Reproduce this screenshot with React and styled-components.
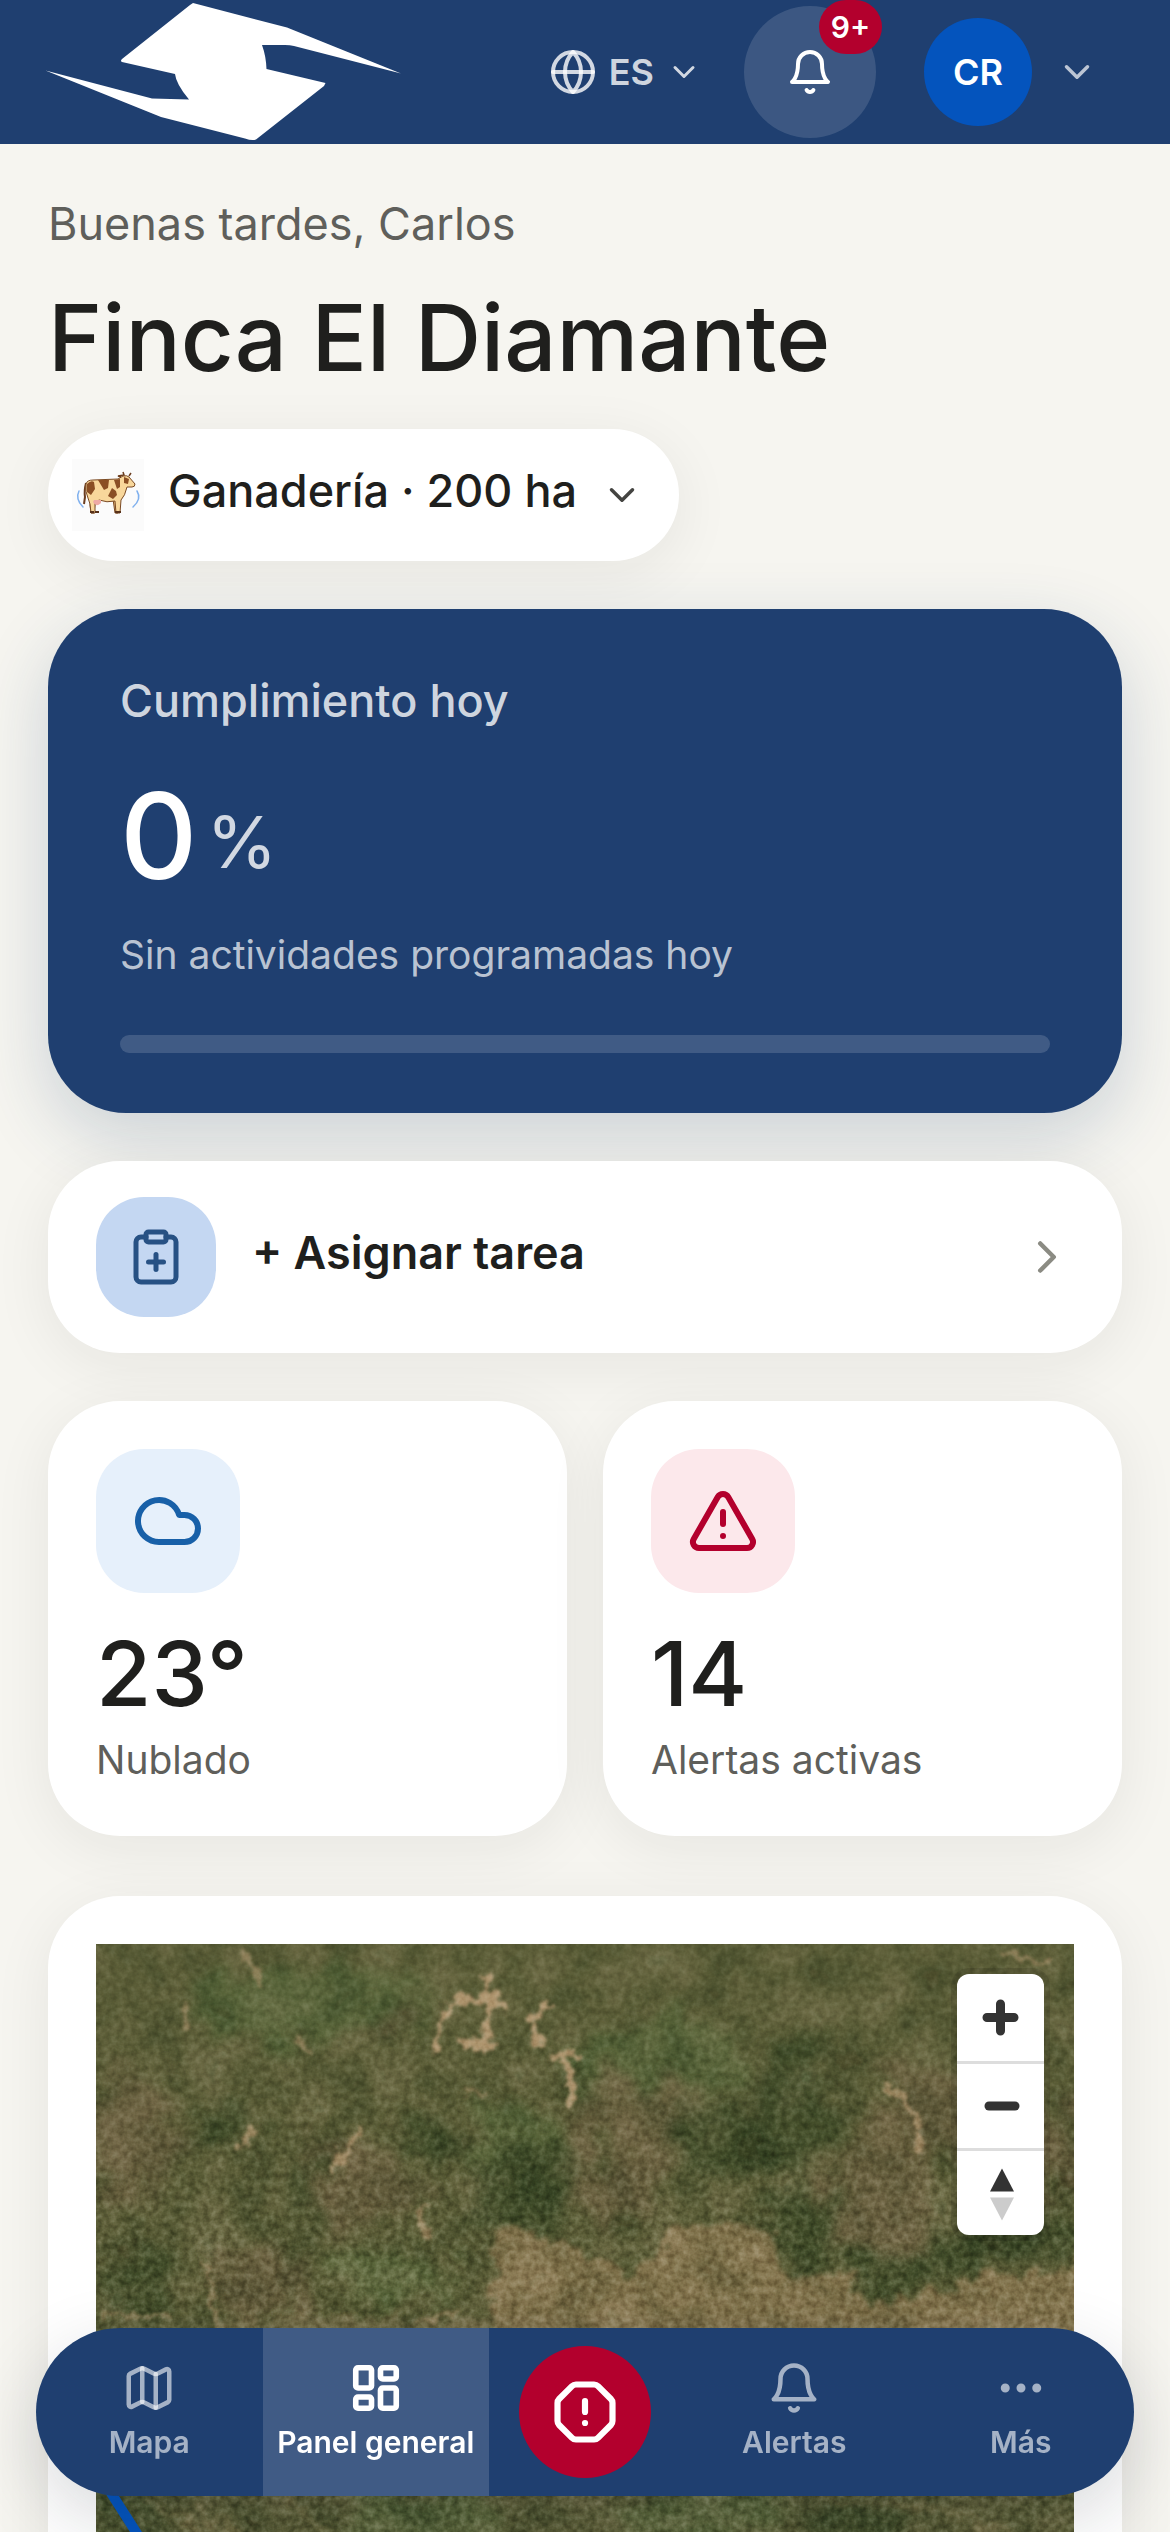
import { useState } from "react";
import styled, { createGlobalStyle } from "styled-components";
import {
  ChevronDown,
  ChevronRight,
  ClipboardPlus,
  Ellipsis,
  Globe,
  LayoutDashboard,
  Map,
  OctagonAlert,
  TriangleAlert,
} from "lucide-react";

const GlobalStyle = createGlobalStyle`
  * {
    box-sizing: border-box;
  }
  body {
    margin: 0;
    background-color: #f6f5f0;
    color: #1f1f1d;
    font-family: Inter, "Liberation Sans", sans-serif;
  }
  button {
    font: inherit;
    color: inherit;
    border: 0;
    padding: 0;
    background: none;
    cursor: pointer;
  }
  a {
    color: inherit;
    text-decoration: none;
  }
  svg {
    display: block;
    flex-shrink: 0;
  }
`;

const Screen = styled.div`
  height: 100vh;
  display: flex;
  flex-direction: column;
`;

const Header = styled.header`
  flex-shrink: 0;
  height: 144px;
  padding: 0 72px 0 45px;
  display: flex;
  align-items: center;
  justify-content: space-between;
  background-color: #1f3f70;
  color: #fff;
`;

const HeaderTools = styled.div`
  display: flex;
  align-items: center;
`;

const LangButton = styled.button`
  display: flex;
  align-items: center;
  gap: 12px;
  margin-right: 42px;
  color: rgba(255, 255, 255, 0.8);
  font-size: 36px;
  font-weight: 600;
`;

const BellButton = styled.button`
  position: relative;
  width: 132px;
  height: 132px;
  margin-right: 48px;
  border-radius: 50%;
  background-color: rgba(255, 255, 255, 0.13);
  display: flex;
  justify-content: center;
  align-items: center;
`;

const Badge = styled.span`
  position: absolute;
  top: -6px;
  right: -6px;
  min-width: 63px;
  height: 54px;
  border-radius: 27px;
  background-color: #b3002d;
  font-size: 30px;
  font-weight: 600;
  line-height: 54px;
  text-align: center;
`;

const ProfileButton = styled.button`
  display: flex;
  align-items: center;
  gap: 24px;
  color: rgba(255, 255, 255, 0.7);
`;

const Avatar = styled.span`
  width: 108px;
  height: 108px;
  border-radius: 50%;
  background-color: #0454bd;
  color: #fff;
  font-size: 36px;
  font-weight: 600;
  line-height: 108px;
  text-align: center;
`;

const Content = styled.main`
  flex: 1;
  min-height: 0;
  overflow-y: auto;
  scrollbar-width: none;
  padding: 48px 48px 0;
`;

const Greeting = styled.p`
  margin: 0 0 26px;
  color: #5f5f5b;
  font-size: 45px;
  line-height: 63px;
`;

const FarmName = styled.h1`
  margin: 0 0 34px;
  font-size: 92px;
  font-weight: 500;
  line-height: 114px;
`;

const softShadow = "0 12px 60px rgba(31, 35, 30, 0.07)";

const FarmButton = styled.button`
  height: 132px;
  padding: 0 36px 0 24px;
  border-radius: 66px;
  background-color: #fff;
  box-shadow: ${softShadow};
  display: flex;
  align-items: center;
  color: #444441;
`;

const RowLabel = styled.span`
  padding-bottom: 9px;
  color: #1f1f1d;
  font-size: 45px;
  font-weight: ${(props) => props.$weight};
`;

const FarmLabel = styled(RowLabel)`
  margin: 0 24px;
`;

const Hero = styled.section`
  margin-top: 48px;
  padding: 60px 72px;
  border-radius: 78px;
  background-color: #1f3f70;
  box-shadow: 0 24px 72px rgba(31, 63, 112, 0.2);
`;

const HeroTitle = styled.h2`
  margin: 0 0 44px;
  color: rgba(255, 255, 255, 0.8);
  font-size: 45px;
  font-weight: 500;
  line-height: 63px;
`;

const HeroValue = styled.div`
  display: flex;
  align-items: flex-end;
  gap: 9px;
  color: #fff;
  font-size: 120px;
  font-weight: 500;
  line-height: 120px;
`;

const HeroUnit = styled.span`
  color: rgba(255, 255, 255, 0.8);
  font-size: 72px;
  font-weight: 400;
  line-height: 108px;
`;

const HeroNote = styled.p`
  margin: 30px 0 52px;
  color: rgba(255, 255, 255, 0.7);
  font-size: 39px;
  line-height: 57px;
`;

const Track = styled.div`
  height: 18px;
  border-radius: 9px;
  overflow: hidden;
  background-color: rgba(255, 255, 255, 0.15);
`;

const TrackFill = styled.div`
  height: 100%;
  background-color: #fff;
`;

const TaskButton = styled.button`
  width: 100%;
  height: 192px;
  margin-top: 48px;
  padding: 0 48px;
  border-radius: 72px;
  background-color: #fff;
  box-shadow: ${softShadow};
  display: flex;
  align-items: center;
  gap: 36px;
  color: #8b8b83;
  text-align: left;

  ${RowLabel} {
    flex: 1;
  }
`;

const IconTile = styled.span`
  width: ${(props) => props.$size}px;
  height: ${(props) => props.$size}px;
  border-radius: 48px;
  background-color: ${(props) => props.$bg};
  color: ${(props) => props.$color};
  display: flex;
  justify-content: center;
  align-items: center;
`;

const Stats = styled.div`
  margin-top: 48px;
  display: grid;
  grid-template-columns: 1fr 1fr;
  gap: 36px;
`;

const StatCard = styled.a`
  padding: 48px;
  border-radius: 72px;
  background-color: #fff;
  box-shadow: ${softShadow};
`;

const StatValue = styled.div`
  margin: 36px 0 12px;
  font-size: 90px;
  font-weight: 500;
  line-height: 90px;
`;

const StatLabel = styled.div`
  color: #5f5f5b;
  font-size: 39px;
  line-height: 57px;
`;

const MapCard = styled.section`
  margin-top: 60px;
  padding: 48px;
  border-radius: 72px;
  background-color: #fff;
  box-shadow: ${softShadow};
`;

const MapFrame = styled.div`
  position: relative;
  height: 720px;
  overflow: hidden;
  background-color: #5b5d36;
`;

const MapControls = styled.div`
  position: absolute;
  top: 30px;
  right: 30px;
  width: 87px;
  border-radius: 12px;
  background-color: #fff;
  box-shadow: 0 0 0 6px rgba(0, 0, 0, 0.1);
`;

const MapControl = styled.button`
  display: block;
  width: 87px;
  height: 87px;

  & + & {
    border-top: 3px solid #ddd;
  }
`;

const NavBar = styled.nav`
  position: fixed;
  left: 36px;
  right: 36px;
  bottom: 36px;
  height: 168px;
  border-radius: 84px;
  overflow: hidden;
  background-color: #1f3f70;
  box-shadow: 0 24px 72px rgba(20, 25, 35, 0.16);
  display: grid;
  grid-template-columns: 1fr 1fr 192px 1fr 1fr;
`;

const NavItem = styled.a`
  padding-bottom: 3px;
  display: flex;
  flex-direction: column;
  justify-content: center;
  align-items: center;
  gap: 9px;
  color: ${(props) => (props.$active ? "#fff" : "rgba(255, 255, 255, 0.6)")};
  background-color: ${(props) =>
    props.$active ? "rgba(255, 255, 255, 0.15)" : "transparent"};
  font-size: 30px;
  font-weight: 600;
  line-height: 36px;
  white-space: nowrap;
`;

const ReportButton = styled.button`
  place-self: center;
  width: 132px;
  height: 132px;
  border-radius: 50%;
  background-color: #b3002d;
  color: #fff;
  display: flex;
  justify-content: center;
  align-items: center;
`;

const Logo = () => (
  <svg width="356" height="144" viewBox="45 0 356 144" role="img" aria-label="Inicio">
    <path
      fill="#fff"
      d="M193 3 L287 27.500 L401 73.500 L294 46 Q290 45 285 45 L262 45 Q266 56 266.500 69 L325.500 83 L324 86 L256 139.500 Q252 141 245 138.500 L161 117 L45.500 70.500 L152 98.500 L189 99.500 Q176 84 175 74 L122 62 Q120 61 122 59 L190 5 Z"
    />
  </svg>
);

const BellIcon = ({ size }) => (
  <svg
    width={size}
    height={size}
    viewBox="0 0 24 24"
    fill="none"
    stroke="currentColor"
    strokeWidth="2"
    strokeLinecap="round"
    strokeLinejoin="round"
    aria-hidden="true"
  >
    <path d="M6 8a6 6 0 0 1 12 0c0 7 3 9 3 9H3s3-2 3-9" />
    <path d="M10.300 21a1.940 1.940 0 0 0 3.400 0" />
  </svg>
);

const CloudIcon = ({ size }) => (
  <svg
    width={size}
    height={size}
    viewBox="0 0 24 24"
    fill="none"
    stroke="currentColor"
    strokeWidth="2"
    strokeLinecap="round"
    strokeLinejoin="round"
    aria-hidden="true"
  >
    <path d="M17.500 19H9a7 7 0 1 1 6.710-9h1.790a4.500 4.500 0 1 1 0 9Z" />
  </svg>
);

const CowIcon = () => (
  <svg width="72" height="72" viewBox="0 0 72 72" aria-hidden="true">
    <rect width="72" height="72" fill="#fbfbfb" />
    <g fill="none" stroke="#7fb0ee" strokeWidth="1.500" strokeLinecap="round">
      <path d="M7 32q-4 8 4 16M65 32q5 8 -4 16" />
    </g>
    <path d="M14 24q-2 8 -1 14l-1 7" fill="none" stroke="#6b3d1e" strokeWidth="2" />
    <g fill="#f8d79b" stroke="#7a4a24" strokeWidth="1" strokeLinejoin="round">
      <path d="M19 40l-1 6 1 8h3l1-9 3-5zM41 40l2 14h3l1-13z" fill="#e4b878" />
      <path d="M14 25q1-4 7-4l25-1 5-3q4-1 6 1l6 7q0 3-3 3l-5 0q-2 9-6 13l-1 13h-4l-1-12q-8 2-16-1l-4 3 0 10h-4l-1-9-2-6q-3-6-2-14z" />
    </g>
    <path d="M21 43q3 6 8 1l0-3h-7z" fill="#eeaaa6" />
    <g fill="#8b4f24">
      <path d="M15 25q4-4 7-2l1 7-4 6-4-3zM26 21h11l-1 8-4 2-3-5zM42 21l6-1 0 8-3 2zM40 29l4 3 1 4-4 4-5-3zM52 18l5 2-1 5-4-1z" />
    </g>
    <path d="M49 18l-3-1 6-1-1-3M57 17l2-3" fill="none" stroke="#6b3d1e" strokeWidth="1.500" />
    <path d="M18 53h4M23 53h4M43 53h3M45 53h4" stroke="#57311a" strokeWidth="2" />
  </svg>
);

const darkPatches = [
  [130, 172, 34, 18],
  [210, 245, 18, 30],
  [40, 345, 42, 34],
  [330, 190, 30, 20],
  [440, 225, 60, 26],
  [420, 262, 48, 24],
  [625, 195, 48, 34],
  [700, 115, 24, 34],
  [700, 180, 40, 36],
  [708, 285, 34, 44],
  [795, 328, 46, 20],
  [872, 312, 44, 18],
  [950, 300, 46, 10],
  [760, 580, 50, 18],
  [30, 580, 40, 30],
];

const brownPatches = [
  [34, 190, 46, 60],
  [160, 340, 50, 40],
  [540, 170, 70, 40],
  [785, 255, 60, 60],
  [830, 165, 50, 50],
  [930, 200, 50, 60],
  [260, 240, 60, 50],
  [520, 240, 50, 34],
  [290, 78, 26, 14],
];

const greenPatches = [
  [300, 335, 60, 30],
  [420, 185, 50, 24],
  [560, 120, 90, 50],
  [210, 60, 120, 40],
  [330, 580, 90, 34],
  [600, 575, 90, 30],
];

const Patches = ({ items, fill, opacity }) =>
  items.map(([x, y, rx, ry]) => (
    <ellipse key={`${x}-${y}`} cx={x} cy={y} rx={rx} ry={ry} fill={fill} opacity={opacity} />
  ));

// Aerial view of the farm: colour patches under a fractal grain
const Terrain = () => (
  <svg
    width="100%"
    height="100%"
    viewBox="0 0 978 720"
    preserveAspectRatio="xMinYMin slice"
    colorInterpolationFilters="sRGB"
    role="img"
    aria-label="Vista satelital de la finca"
  >
    <defs>
      <filter id="patch" x="-30%" y="-30%" width="160%" height="160%">
        <feTurbulence type="fractalNoise" baseFrequency="0.030" numOctaves="5" seed="5" />
        <feDisplacementMap in="SourceGraphic" scale="80" xChannelSelector="R" yChannelSelector="G" />
        <feGaussianBlur stdDeviation="6" />
      </filter>
      <filter id="edge" x="-10%" y="-10%" width="120%" height="120%">
        <feTurbulence type="fractalNoise" baseFrequency="0.050" numOctaves="5" seed="9" />
        <feDisplacementMap in="SourceGraphic" scale="40" xChannelSelector="R" yChannelSelector="G" />
        <feGaussianBlur stdDeviation="2" />
      </filter>
      <filter id="track" x="-10%" y="-10%" width="120%" height="120%">
        <feTurbulence type="fractalNoise" baseFrequency="0.090" numOctaves="3" seed="3" />
        <feDisplacementMap in="SourceGraphic" scale="20" xChannelSelector="R" yChannelSelector="G" />
        <feGaussianBlur stdDeviation="1.500" />
      </filter>
      <filter id="grain" x="0" y="0" width="100%" height="100%">
        <feTurbulence type="fractalNoise" baseFrequency="0.140" numOctaves="3" seed="12" />
        <feColorMatrix values="1.500 0 0 0 -0.250  1.500 0 0 0 -0.250  1.500 0 0 0 -0.250  0 0 0 0 1" />
      </filter>
      <filter id="mottle" x="0" y="0" width="100%" height="100%">
        <feTurbulence type="fractalNoise" baseFrequency="0.022" numOctaves="4" seed="21" />
        <feColorMatrix values="2 0 0 0 -0.500  1.500 0 0 0 -0.250  1.500 0 0 0 -0.250  0 0 0 0 1" />
      </filter>
      <linearGradient id="grainFade" x1="0" y1="0" x2="0" y2="1">
        <stop offset="0" stopColor="#777" />
        <stop offset="0.400" stopColor="#fff" />
      </linearGradient>
      <mask id="grainMask">
        <rect width="978" height="720" fill="url(#grainFade)" />
      </mask>
    </defs>
    <rect width="978" height="720" fill="#5b5d37" />
    <g filter="url(#patch)">
      <Patches items={greenPatches} fill="#58653a" opacity="0.8" />
      <Patches items={brownPatches} fill="#695f3e" opacity="0.8" />
      <Patches items={darkPatches} fill="#3c4a27" opacity="0.75" />
    </g>
    <g filter="url(#edge)">
      <path
        fill="#87764f"
        opacity="0.850"
        d="M398 290 L430 282 L450 296 L500 306 L530 330 L555 318 L585 276 L600 282 L655 278 L678 300 L690 332 L745 325 L770 358 L820 352 L860 340 L990 318 L990 420 L398 420 Z"
      />
      <path fill="#7c7049" opacity="0.500" d="M120 374 H420 V420 H120 Z" />
      <path
        fill="none"
        stroke="#7a7148"
        strokeWidth="7"
        opacity="0.600"
        d="M60 560 L150 620 M100 556 L190 640 M190 556 L300 650 M730 556 L860 566 L978 620"
      />
    </g>
    <rect width="978" height="720" filter="url(#mottle)" opacity="0.250" style={{ mixBlendMode: "soft-light" }} />
    <g
      filter="url(#track)"
      fill="none"
      stroke="#b99d77"
      strokeWidth="6"
      strokeLinecap="round"
      strokeLinejoin="round"
      opacity="0.900"
    >
      <path d="M391 34 L394 62 L388 108 M390 60 L362 54 L346 78 L338 104 M366 98 L400 102 M398 60 L408 64" />
      <path d="M388 52 L398 54 M382 98 L396 102" strokeWidth="12" />
      <path d="M452 62 L434 76 L442 100 M466 110 L474 130 L478 156 M458 110 L482 112" />
      <path d="M148 8 L158 24 L166 40" opacity="0.600" />
      <path d="M196 94 L214 106 M88 62 L92 86" opacity="0.600" />
      <path d="M788 140 L808 156 L822 178 M822 190 L826 206" opacity="0.800" />
      <path d="M262 190 L246 210 L238 224 M156 186 L148 200" opacity="0.800" strokeWidth="8" />
      <path d="M325 266 L330 292" opacity="0.700" strokeWidth="9" />
      <path d="M110 320 L116 352 L122 384 M318 378 L360 370 M10 372 L70 372" opacity="0.500" />
      <path d="M910 10 L950 20 M370 146 L384 150" opacity="0.600" />
    </g>
    <g mask="url(#grainMask)" opacity="0.450" style={{ mixBlendMode: "soft-light" }}>
      <rect width="978" height="720" filter="url(#grain)" />
    </g>
    <path d="M-17 498 L17 552 L40 588 L125 720" fill="none" stroke="#0454bd" strokeWidth="10" />
  </svg>
);

const navLeft = [
  { label: "Mapa", icon: <Map size={54} /> },
  { label: "Panel general", icon: <LayoutDashboard size={54} strokeWidth={2.5} />, active: true },
];

const navRight = [
  { label: "Alertas", icon: <BellIcon size={54} /> },
  { label: "Más", icon: <Ellipsis size={54} /> },
];

const NavLinks = ({ items }) =>
  items.map((item) => (
    <NavItem
      key={item.label}
      href="#"
      $active={item.active}
      aria-current={item.active ? "page" : undefined}
    >
      {item.icon}
      {item.label}
    </NavItem>
  ));

const App = () => {
  const [progress] = useState(0);

  return (
    <Screen>
      <GlobalStyle />
      <Header>
        <Logo />
        <HeaderTools>
          <LangButton aria-haspopup="true">
            <Globe size={48} />
            ES
            <ChevronDown size={36} />
          </LangButton>
          <BellButton aria-label="Notificaciones">
            <BellIcon size={48} />
            <Badge>9+</Badge>
          </BellButton>
          <ProfileButton aria-haspopup="true">
            <Avatar>CR</Avatar>
            <ChevronDown size={42} />
          </ProfileButton>
        </HeaderTools>
      </Header>

      <Content>
        <Greeting>Buenas tardes, Carlos</Greeting>
        <FarmName>Finca El Diamante</FarmName>
        <FarmButton aria-haspopup="true">
          <CowIcon />
          <FarmLabel $weight={500}>Ganadería · 200 ha</FarmLabel>
          <ChevronDown size={42} />
        </FarmButton>

        <Hero>
          <HeroTitle>Cumplimiento hoy</HeroTitle>
          <HeroValue>
            {progress}
            <HeroUnit>%</HeroUnit>
          </HeroValue>
          <HeroNote>Sin actividades programadas hoy</HeroNote>
          <Track
            role="progressbar"
            aria-label="Cumplimiento hoy"
            aria-valuenow={progress}
            aria-valuemin={0}
            aria-valuemax={100}
          >
            <TrackFill style={{ width: `${progress}%` }} />
          </Track>
        </Hero>

        <TaskButton>
          <IconTile $size={120} $bg="#c4d7f2" $color="#275184">
            <ClipboardPlus size={60} />
          </IconTile>
          <RowLabel $weight={600}>+ Asignar tarea</RowLabel>
          <ChevronRight size={54} />
        </TaskButton>

        <Stats>
          <StatCard href="#">
            <IconTile $size={144} $bg="#e6f0fb" $color="#1860a8">
              <CloudIcon size={72} />
            </IconTile>
            <StatValue>23°</StatValue>
            <StatLabel>Nublado</StatLabel>
          </StatCard>
          <StatCard href="#">
            <IconTile $size={144} $bg="#fce8eb" $color="#b3002d">
              <TriangleAlert size={72} />
            </IconTile>
            <StatValue>14</StatValue>
            <StatLabel>Alertas activas</StatLabel>
          </StatCard>
        </Stats>

        <MapCard>
          <MapFrame>
            <Terrain />
            <MapControls>
              <MapControl aria-label="Acercar">
                <svg width="87" height="87" viewBox="0 0 87 87">
                  <path d="M30 43.500h27M43.500 30v27" stroke="#333" strokeWidth="9" strokeLinecap="round" />
                </svg>
              </MapControl>
              <MapControl aria-label="Alejar">
                <svg width="87" height="84" viewBox="0 0 87 84">
                  <path d="M32 42h26" stroke="#333" strokeWidth="9" strokeLinecap="round" />
                </svg>
              </MapControl>
              <MapControl aria-label="Orientar al norte">
                <svg width="87" height="84" viewBox="0 0 87 84">
                  <path d="M33 40.500h24l-12-23z" fill="#333" />
                  <path d="M33 46.500h24l-12 23z" fill="#ccc" />
                </svg>
              </MapControl>
            </MapControls>
          </MapFrame>
        </MapCard>
      </Content>

      <NavBar>
        <NavLinks items={navLeft} />
        <ReportButton aria-label="Reportar incidente">
          <OctagonAlert size={66} strokeWidth={2.250} />
        </ReportButton>
        <NavLinks items={navRight} />
      </NavBar>
    </Screen>
  );
};

export default App;
